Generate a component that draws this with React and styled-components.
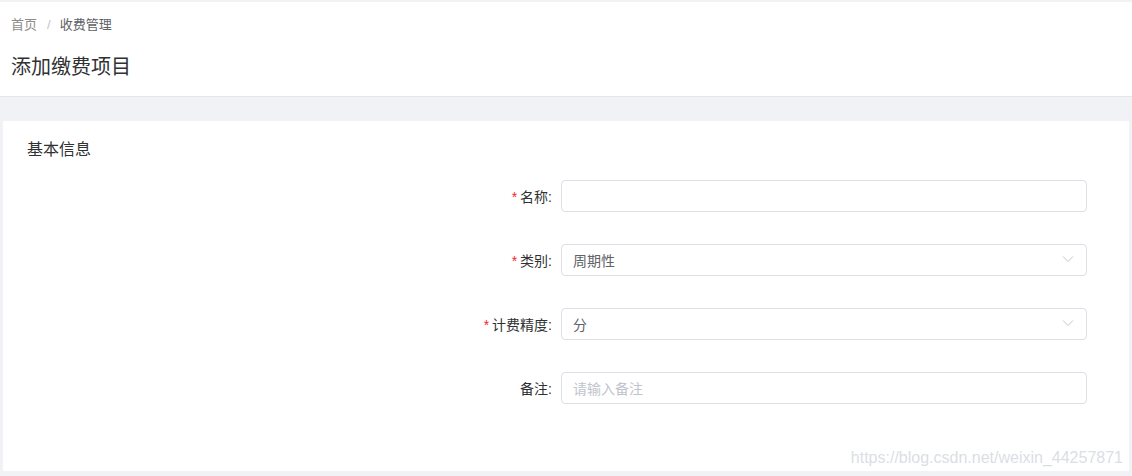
import React from "react"
import styled, { createGlobalStyle } from "styled-components"

const GlobalStyle = createGlobalStyle`
  html, body {
    margin: 0;
    padding: 0;
    background: #f0f2f5;
    font-family: "Liberation Sans", "Noto Sans CJK SC", sans-serif;
  }
`

const fields = [
  { label: "名称", required: true, kind: "input", value: "" },
  { label: "类别", required: true, kind: "select", value: "周期性" },
  { label: "计费精度", required: true, kind: "select", value: "分" },
  { label: "备注", required: false, kind: "input", placeholder: "请输入备注" },
]

const Page = styled.div`
  position: relative;
  width: 1132px;
  height: 476px;
  padding-top: 2px;
  box-sizing: border-box;
  overflow: hidden;
`

const Header = styled.div`
  background: #fff;
  height: 95px;
  box-sizing: border-box;
  border-bottom: 1px solid #e6e6e6;
  padding: 15px 11px 0;
`

const Breadcrumb = styled.div`
  display: flex;
  align-items: center;
  font-size: 13px;
  line-height: 16px;
  color: #606266;
  .home {
    color: #8c8c8c;
  }
  .sep {
    color: #c0c4cc;
    margin: 0 9px 0 10px;
  }
`

const Title = styled.h1`
  margin: 21px 0 0;
  font-size: 20px;
  line-height: 26px;
  font-weight: 400;
  color: #303133;
`

const Card = styled.div`
  background: #fff;
  margin: 24px 3px 0;
  height: 350px;
  box-sizing: border-box;
  padding: 18px 0 0;
`

const SectionTitle = styled.div`
  padding-left: 24px;
  font-size: 16px;
  line-height: 22px;
  color: #303133;
`

const Form = styled.div`
  display: flex;
  flex-direction: column;
  gap: 32px;
  margin-top: 19px;
`

const Row = styled.div`
  display: grid;
  grid-template-columns: 1fr 526px 42px;
  align-items: center;
`

const Label = styled.label`
  text-align: right;
  padding-right: 9px;
  font-size: 14px;
  color: #303133;
  .star {
    color: #f5222d;
    margin-right: 3px;
  }
`

const Box = styled.div`
  position: relative;
  height: 32px;
  box-sizing: border-box;
  border: 1px solid #dcdfe6;
  border-radius: 4px;
  display: flex;
  align-items: center;
  padding: 0 11px;
  font-size: 14px;
  color: ${({ placeholder }) => (placeholder ? "#c0c4cc" : "#606266")};
`

const Arrow = styled.svg`
  position: absolute;
  right: 12px;
  top: 50%;
  margin-top: -5px;
`

const Watermark = styled.div`
  position: absolute;
  right: 9px;
  bottom: 9px;
  font-size: 16px;
  color: rgba(214, 218, 226, 0.9);
  font-family: "Liberation Sans", sans-serif;
`

const App = () => (
  <>
    <GlobalStyle />
    <Page>
      <Header>
        <Breadcrumb>
          <span className="home">首页</span>
          <span className="sep">/</span>
          <span>收费管理</span>
        </Breadcrumb>
        <Title>添加缴费项目</Title>
      </Header>
      <Card>
        <SectionTitle>基本信息</SectionTitle>
        <Form>
          {fields.map((f) => (
            <Row key={f.label}>
              <Label>
                {f.required && <span className="star">*</span>}
                {f.label}:
              </Label>
              <Box placeholder={f.placeholder ? 1 : undefined}>
                {f.value || f.placeholder}
                {f.kind === "select" && (
                  <Arrow width="12" height="8" viewBox="0 0 12 8">
                    <path d="M1 1.5 L6 6.5 L11 1.5" fill="none" stroke="#c0c4cc" strokeWidth="1" />
                  </Arrow>
                )}
              </Box>
              <span />
            </Row>
          ))}
        </Form>
      </Card>
      <Watermark>https://blog.csdn.net/weixin_44257871</Watermark>
    </Page>
  </>
)

export default App
